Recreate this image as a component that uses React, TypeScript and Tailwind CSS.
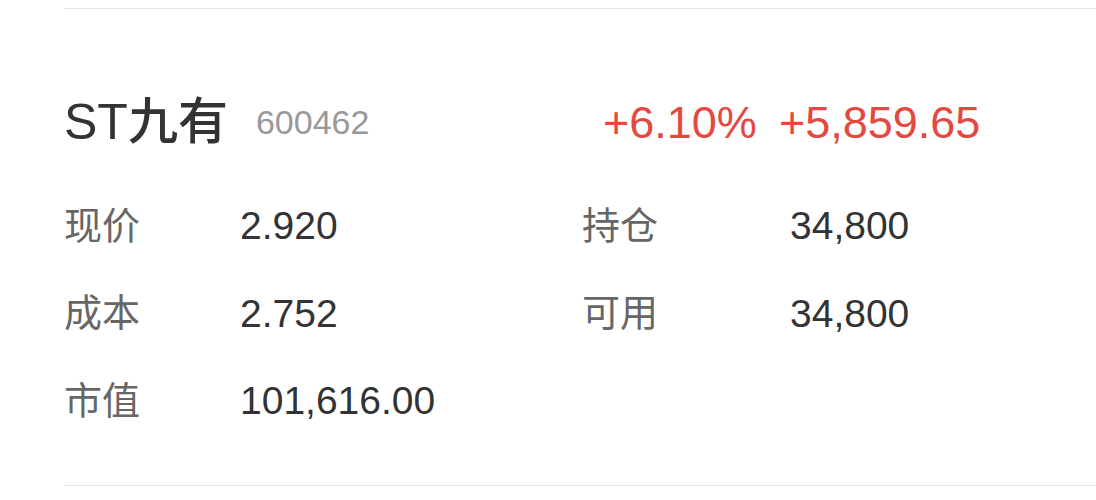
const font = { fontFamily: '"Liberation Sans", "Noto Sans CJK SC", sans-serif' };

const rows = [
  [
    { label: '现价', value: '2.920' },
    { label: '持仓', value: '34,800' },
  ],
  [
    { label: '成本', value: '2.752' },
    { label: '可用', value: '34,800' },
  ],
  [{ label: '市值', value: '101,616.00' }],
];

export default function App() {
  return (
    <div className="w-[1096px] h-[500px] bg-white pl-16 pt-2" style={font}>
      {/* top divider */}
      <div className="h-px bg-[#e6e6e6]" />

      <div className="pt-[83px] pb-[40px] border-b border-[#e6e6e6]">
        {/* header */}
        <div className="flex items-center h-[60px]">
          <div className="w-[539px] flex items-center">
            <span className="text-[50px] leading-none font-medium text-[#333]">ST九有</span>
            <span className="ml-[28px] text-[34px] leading-none text-[#999]">600462</span>
          </div>
          <div className="flex items-center gap-[22px] text-[45px] leading-none text-[#e5483f]">
            <span>+6.10%</span>
            <span>+5,859.65</span>
          </div>
        </div>

        {/* details */}
        <div className="mt-[30px]">
          {rows.map((row, i) => (
            <div key={i} className="flex items-center h-[87.5px]">
              {row.map((cell, j) => (
                <div key={j} className={`flex items-center ${j === 0 ? 'w-[518px]' : ''}`}>
                  <span className={`${j === 0 ? 'w-[176px]' : 'w-[208px]'} text-[38px] leading-none text-[#666]`}>
                    {cell.label}
                  </span>
                  <span className="text-[39px] leading-none text-[#333]">{cell.value}</span>
                </div>
              ))}
            </div>
          ))}
        </div>
      </div>
    </div>
  );
}
